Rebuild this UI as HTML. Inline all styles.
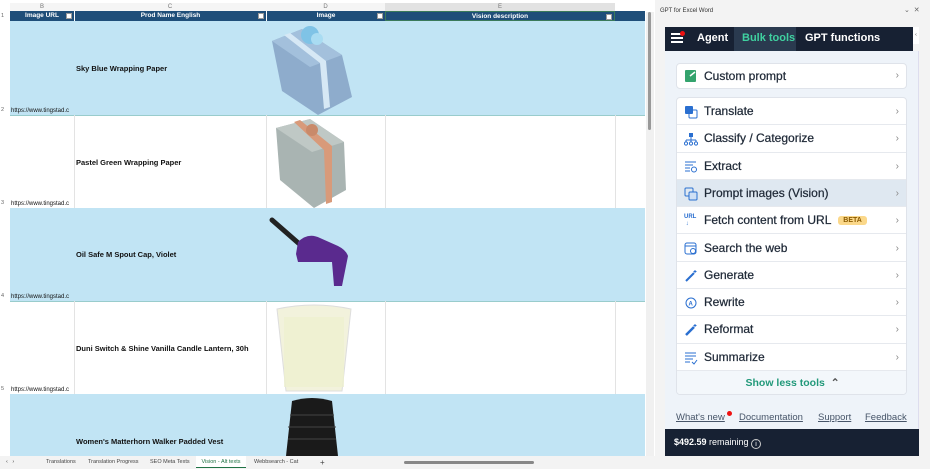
<!DOCTYPE html>
<html><head><meta charset="utf-8"><style>
*{box-sizing:border-box;margin:0;padding:0}
body{width:930px;height:469px;overflow:hidden;background:#f3f3f3;font-family:"Liberation Sans",sans-serif;position:relative}
.a{position:absolute}
.colh{top:3px;height:8px;font-size:6px;color:#777;text-align:center;background:#f5f5f5;line-height:8px}
.hdr{top:11px;height:10px;background:#1f4e79;color:#fff;font-size:6.5px;font-weight:bold;text-align:center;line-height:10px}
.dd{position:absolute;right:2px;top:2px;width:6px;height:6px;background:#fff;border:1px solid #999}
.row{left:10px;width:635px}
.blue{background:#c1e4f4}
.white{background:#fff}
.url{font-size:6px;color:#111;position:absolute;left:1px;bottom:1px}
.nm{font-size:7.5px;font-weight:bold;color:#111;position:absolute;left:66px}
.rn{font-size:5.5px;color:#666;left:1px}
.item{position:absolute;left:0;width:231px;height:27.3px;border-bottom:1px solid #e6e9ee;font-size:12px;color:#1f2937;line-height:27px;padding-left:27px;-webkit-text-stroke:0.25px #1f2937}
.item .chev{position:absolute;right:9px;top:0;color:#888;font-size:10px;-webkit-text-stroke:0}
.ic{position:absolute;left:7px;top:7px;width:14px;height:14px}
</style></head><body>
<div class="a" style="left:0;top:0;width:655px;height:456px;background:#fff"></div>
<div class="a colh" style="left:10px;width:64px">B</div>
<div class="a colh" style="left:74px;width:192px">C</div>
<div class="a colh" style="left:266px;width:119px">D</div>
<div class="a colh" style="left:385px;width:230px;background:#e2e2e2">E</div>
<div class="a hdr" style="left:10px;width:64px">Image URL<span class="dd"></span></div>
<div class="a hdr" style="left:74px;width:192px;border-left:1px solid #fff">Prod Name English<span class="dd"></span></div>
<div class="a hdr" style="left:266px;width:119px;border-left:1px solid #fff">Image<span class="dd"></span></div>
<div class="a hdr" style="left:385px;width:230px;border:1px solid #3a7a5a">Vision description<span class="dd"></span></div>
<div class="a hdr" style="left:615px;width:30px"></div>
<div class="a rn" style="top:13px">1</div>

<div class="a row blue" style="top:21px;height:94px"><span class="nm" style="top:43px">Sky Blue Wrapping Paper</span><span class="url">https://www.tingstad.c</span></div>
<div class="a row white" style="top:115px;height:93px;border-top:1px solid #9cc"><span class="nm" style="top:42px">Pastel Green Wrapping Paper</span><span class="url">https://www.tingstad.c</span></div>
<div class="a row blue" style="top:208px;height:93px"><span class="nm" style="top:42px">Oil Safe M Spout Cap, Violet</span><span class="url">https://www.tingstad.c</span></div>
<div class="a row white" style="top:301px;height:93px;border-top:1px solid #9cc"><span class="nm" style="top:42px">Duni Switch &amp; Shine Vanilla Candle Lantern, 30h</span><span class="url">https://www.tingstad.c</span></div>
<div class="a row blue" style="top:394px;height:62px"><span class="nm" style="top:43px">Women's Matterhorn Walker Padded Vest</span></div>
<div class="a rn" style="top:107px">2</div><div class="a rn" style="top:200px">3</div><div class="a rn" style="top:293px">4</div><div class="a rn" style="top:386px">5</div>
<div class="a" style="top:115px;left:74px;width:1px;height:93px;background:#e3e3e3"></div>
<div class="a" style="top:301px;left:74px;width:1px;height:93px;background:#e3e3e3"></div>
<div class="a" style="top:115px;left:266px;width:1px;height:93px;background:#e3e3e3"></div>
<div class="a" style="top:301px;left:266px;width:1px;height:93px;background:#e3e3e3"></div>
<div class="a" style="top:115px;left:385px;width:1px;height:93px;background:#e3e3e3"></div>
<div class="a" style="top:301px;left:385px;width:1px;height:93px;background:#e3e3e3"></div>
<div class="a" style="top:115px;left:615px;width:1px;height:93px;background:#e3e3e3"></div>
<div class="a" style="top:301px;left:615px;width:1px;height:93px;background:#e3e3e3"></div>

<svg class="a" style="left:268px;top:21px" width="90" height="95">
<polygon points="4,20 34,8 74,34 84,76 50,94 14,70" fill="#8eaccc"/>
<polygon points="4,20 34,8 74,34 42,46" fill="#a3c0dc"/>
<polygon points="16,14 22,12 58,40 62,86 56,88 52,42" fill="#d6e8f5"/>
<circle cx="42" cy="14" r="9" fill="#7fc3e6"/><circle cx="49" cy="18" r="6" fill="#a9dcf2"/>
</svg>
<svg class="a" style="left:272px;top:116px" width="90" height="92">
<polygon points="4,12 38,3 72,26 74,74 42,92 8,64" fill="#a9b4b2"/>
<polygon points="4,12 38,3 72,26 40,36" fill="#bfc8c5"/>
<polygon points="22,6 28,4 60,30 60,86 54,88 52,34" fill="#d89a7a"/>
<circle cx="40" cy="14" r="6" fill="#c98a6a"/>
</svg>
<svg class="a" style="left:268px;top:216px" width="90" height="75">
<line x1="4" y1="4" x2="36" y2="32" stroke="#222" stroke-width="5" stroke-linecap="round"/>
<path d="M28,38 L30,26 Q40,16 52,22 L70,30 Q78,34 80,40 L74,70 L66,70 L64,46 L30,46 Z" fill="#5a2a8e"/>
</svg>
<svg class="a" style="left:274px;top:303px" width="80" height="90">
<path d="M3,6 Q40,-2 77,6 L68,88 L12,88 Z" fill="#f2f2dc" stroke="#ddd"/>
<rect x="10" y="14" width="60" height="70" fill="#eef0cf" opacity=".8"/>
</svg>
<svg class="a" style="left:284px;top:395px" width="56" height="61">
<path d="M8,6 Q28,0 48,6 L54,61 L2,61 Z" fill="#1a1a1a"/>
<path d="M6,20 H50 M4,32 H52 M4,44 H52" stroke="#444" stroke-width="1"/>
</svg>

<div class="a" style="left:646px;top:12px;width:8px;height:444px;background:#f0f0f0"></div>
<div class="a" style="left:648px;top:12px;width:3px;height:118px;background:#999;border-radius:2px"></div>
<div class="a" style="left:0;top:456px;width:655px;height:13px;background:#f3f3f3;font-size:5.5px;color:#444;line-height:13px">
<span class="a" style="left:6px">‹ &nbsp; ›</span>
<span class="a" style="left:46px">Translations</span>
<span class="a" style="left:88px">Translation Progress</span>
<span class="a" style="left:150px">SEO Meta Texts</span>
<span class="a" style="left:196px;width:50px;background:#fff;text-align:center;border-bottom:1px solid #217346;color:#217346;height:12px">Vision - Alt texts</span>
<span class="a" style="left:254px">Webbsearch - Cat</span>
<span class="a" style="left:320px;font-size:8px">+</span>
<span class="a" style="left:404px;top:5px;width:130px;height:3px;background:#888;border-radius:2px"></span>
</div>

<div class="a" style="left:660px;top:8px;font-size:6px;color:#333">GPT for Excel Word</div>
<div class="a" style="left:904px;top:6px;font-size:7px;color:#666">⌄ &nbsp;✕</div>
<div class="a" style="left:665px;top:51px;width:254px;height:378px;background:#eef3f9;border-right:1px solid #dde"></div>
<div class="a" style="left:665px;top:27px;width:248px;height:24px;background:#172133"></div>
<div class="a" style="left:913px;top:27px;width:6px;height:17px;background:#fff;font-size:5px;color:#333;text-align:center;line-height:17px">‹</div>
<div class="a" style="left:671px;top:33px;width:12px;height:2px;background:#fff;box-shadow:0 4px 0 #fff,0 8px 0 #fff"></div>
<div class="a" style="left:680px;top:31px;width:5px;height:5px;background:#e11;border-radius:50%"></div>
<div class="a" style="left:697px;top:32px;font-size:11px;font-weight:bold;color:#fff">Agent</div>
<div class="a" style="left:734px;top:27px;width:62px;height:24px;background:#2a3a4f"></div>
<div class="a" style="left:742px;top:32px;font-size:11px;font-weight:bold;color:#3fd1a0">Bulk tools</div>
<div class="a" style="left:805px;top:32px;font-size:11px;font-weight:bold;color:#fff">GPT functions</div>

<div class="a" style="left:676px;top:63px;width:231px;height:26px;background:#fff;border:1px solid #dfe3ea;border-radius:4px">
<div class="item" style="top:0;border:none;height:25px;line-height:24px;left:0"><svg class="ic" style="top:5px" viewBox="0 0 14 14"><rect x="1" y="1" width="11" height="12" rx="1" fill="#34a36d"/><path d="M6 7 l5 -4" stroke="#fff" stroke-width="1.5"/></svg>Custom prompt<span class="chev">›</span></div></div>

<div class="a" style="left:676px;top:97px;width:231px;height:298px;background:#fff;border:1px solid #dfe3ea;border-radius:4px;overflow:hidden">
<div class="item" style="top:0"><svg class="ic" viewBox="0 0 14 14"><rect x="1" y="1" width="8" height="8" rx="1" fill="#2a6fd0"/><rect x="5" y="5" width="8" height="8" rx="1" fill="none" stroke="#2a6fd0"/></svg>Translate<span class="chev">›</span></div>
<div class="item" style="top:27.3px"><svg class="ic" viewBox="0 0 14 14"><rect x="5" y="1" width="4" height="4" fill="#2a6fd0"/><path d="M7 5v3M2 8h10M2 8v2M7 8v2M12 8v2" stroke="#2a6fd0"/><circle cx="2" cy="11.5" r="1.6" fill="none" stroke="#2a6fd0"/><circle cx="7" cy="11.5" r="1.6" fill="none" stroke="#2a6fd0"/><circle cx="12" cy="11.5" r="1.6" fill="none" stroke="#2a6fd0"/></svg>Classify / Categorize<span class="chev">›</span></div>
<div class="item" style="top:54.6px"><svg class="ic" viewBox="0 0 14 14"><path d="M1 2h11M1 5h8M1 8h5M1 11h5" stroke="#2a6fd0"/><circle cx="10" cy="9.5" r="2.5" fill="none" stroke="#2a6fd0"/></svg>Extract<span class="chev">›</span></div>
<div class="item" style="top:81.9px;background:#dfe8f1"><svg class="ic" viewBox="0 0 14 14"><rect x="1" y="1" width="8" height="8" rx="1" fill="none" stroke="#2a6fd0"/><rect x="5" y="5" width="8" height="8" rx="1" fill="#cfe0f5" stroke="#2a6fd0"/></svg>Prompt images (Vision)<span class="chev">›</span></div>
<div class="item" style="top:109.2px"><span class="ic" style="font-size:6px;font-weight:bold;color:#2a6fd0;line-height:7px;-webkit-text-stroke:0">URL<br>&nbsp;↓</span>Fetch content from URL <span style="background:#fbd88a;color:#8a5a00;font-size:7px;font-weight:bold;padding:1px 5px;border-radius:3px;margin-left:4px;vertical-align:2px;-webkit-text-stroke:0">BETA</span><span class="chev">›</span></div>
<div class="item" style="top:136.5px"><svg class="ic" viewBox="0 0 14 14"><rect x="1" y="1" width="11" height="11" rx="2" fill="none" stroke="#2a6fd0"/><path d="M1 4h11" stroke="#2a6fd0"/><circle cx="9" cy="9" r="2.5" fill="#fff" stroke="#2a6fd0"/></svg>Search the web<span class="chev">›</span></div>
<div class="item" style="top:163.8px"><svg class="ic" viewBox="0 0 14 14"><path d="M2 12 L10 4" stroke="#2a6fd0" stroke-width="2"/><path d="M11 1v3M9.5 2.5h3" stroke="#2a6fd0"/></svg>Generate<span class="chev">›</span></div>
<div class="item" style="top:191.1px"><svg class="ic" viewBox="0 0 14 14"><path d="M2 7a5 5 0 0 1 10 0M12 7a5 5 0 0 1 -10 0" fill="none" stroke="#2a6fd0"/><text x="4.5" y="9.5" font-size="6" font-weight="bold" fill="#2a6fd0" font-family="Liberation Sans">A</text></svg>Rewrite<span class="chev">›</span></div>
<div class="item" style="top:218.4px"><svg class="ic" viewBox="0 0 14 14"><path d="M2 12 L10 4" stroke="#2a6fd0" stroke-width="2.5"/><path d="M11 1v3M9.5 2.5h3" stroke="#2a6fd0"/></svg>Reformat<span class="chev">›</span></div>
<div class="item" style="top:245.7px"><svg class="ic" viewBox="0 0 14 14"><path d="M1 2h11M1 5h11M1 8h8M1 11h5" stroke="#2a6fd0"/><path d="M8 11l2 2 3-4" stroke="#2a6fd0" fill="none"/></svg>Summarize<span class="chev">›</span></div>
<div class="a" style="top:273px;left:0;width:231px;height:25px;background:#f3f7fb;text-align:center;font-size:10.5px;font-weight:bold;color:#22997a;line-height:25px">Show less tools &nbsp;<span style="color:#555">⌃</span></div>
</div>

<div class="a" style="left:676px;top:412px;font-size:9.5px;color:#475569;text-decoration:underline;white-space:nowrap">What's new</div>
<div class="a" style="left:727px;top:411px;width:5px;height:5px;border-radius:50%;background:#e11"></div>
<div class="a" style="left:739px;top:412px;font-size:9.5px;color:#475569;text-decoration:underline">Documentation</div>
<div class="a" style="left:818px;top:412px;font-size:9.5px;color:#475569;text-decoration:underline">Support</div>
<div class="a" style="left:865px;top:412px;font-size:9.5px;color:#475569;text-decoration:underline">Feedback</div>
<div class="a" style="left:665px;top:429px;width:254px;height:27px;background:#172133"></div>
<div class="a" style="left:674px;top:437px;font-size:9px;color:#fff"><b>$492.59</b> remaining <span style="display:inline-block;width:10px;height:10px;border:1px solid #ccc;border-radius:50%;font-size:7px;text-align:center;line-height:9px;vertical-align:-1px">i</span></div>
</body></html>
